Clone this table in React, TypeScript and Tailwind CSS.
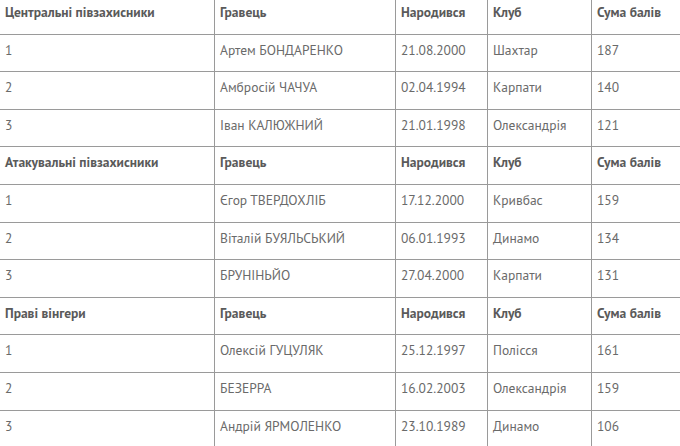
import React from "react";

type Row = [string, string, string, string, string];

const groups: { title: string; rows: Row[] }[] = [
  {
    title: "Центральні півзахисники",
    rows: [
      ["1", "Артем БОНДАРЕНКО", "21.08.2000", "Шахтар", "187"],
      ["2", "Амбросій ЧАЧУА", "02.04.1994", "Карпати", "140"],
      ["3", "Іван КАЛЮЖНИЙ", "21.01.1998", "Олександрія", "121"],
    ],
  },
  {
    title: "Атакувальні півзахисники",
    rows: [
      ["1", "Єгор ТВЕРДОХЛІБ", "17.12.2000", "Кривбас", "159"],
      ["2", "Віталій БУЯЛЬСЬКИЙ", "06.01.1993", "Динамо", "134"],
      ["3", "БРУНІНЬЙО", "27.04.2000", "Карпати", "131"],
    ],
  },
  {
    title: "Праві вінгери",
    rows: [
      ["1", "Олексій ГУЦУЛЯК", "25.12.1997", "Полісся", "161"],
      ["2", "БЕЗЕРРА", "16.02.2003", "Олександрія", "159"],
      ["3", "Андрій ЯРМОЛЕНКО", "23.10.1989", "Динамо", "106"],
    ],
  },
];

const cell = "border border-[#9a9a9a] px-[5px] pt-[5px] align-top text-left whitespace-nowrap";

export default function App() {
  return (
    <div
      className="h-[446px] w-[680px] overflow-hidden bg-white text-[13.5px] leading-[20px] text-[#6a6a6a]"
      style={{ fontFamily: '"PT Sans", "Noto Sans", "Open Sans", sans-serif' }}
    >
      <table className="-ml-px -mt-[4px] w-[720px] table-fixed border-collapse">
        <colgroup>
          <col className="w-[215px]" />
          <col className="w-[181px]" />
          <col className="w-[92px]" />
          <col className="w-[104px]" />
          <col />
        </colgroup>
        <tbody>
          {groups.map((g) => (
            <React.Fragment key={g.title}>
              <tr className="h-[37.6px] font-bold text-[#5a5a5a]">
                <td className={cell}>{g.title}</td>
                <td className={cell}>Гравець</td>
                <td className={cell}>Народився</td>
                <td className={cell}>Клуб</td>
                <td className={cell}>Сума балів</td>
              </tr>
              {g.rows.map((r) => (
                <tr key={g.title + r[0]} className="h-[37.6px]">
                  {r.map((v, i) => (
                    <td key={i} className={cell}>
                      {v}
                    </td>
                  ))}
                </tr>
              ))}
            </React.Fragment>
          ))}
        </tbody>
      </table>
    </div>
  );
}
